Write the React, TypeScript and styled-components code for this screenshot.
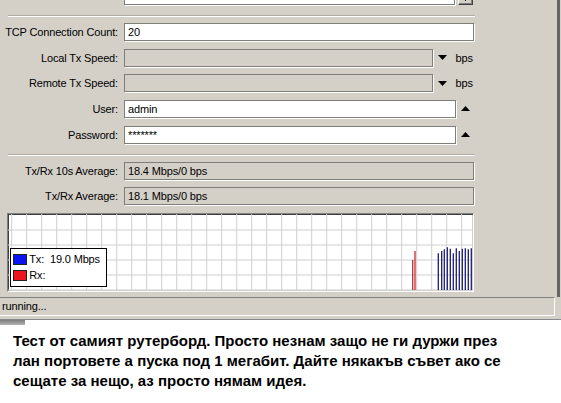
import styled, { createGlobalStyle } from "styled-components";

const GlobalStyle = createGlobalStyle`
  html, body {
    margin: 0;
    padding: 0;
    background: #fff;
  }
  body {
    font-family: "Liberation Sans", Arial, sans-serif;
  }
`;

const Page = styled.div`
  width: 561px;
  height: 403px;
  overflow: hidden;
  display: flex;
  flex-direction: column;
`;

const Window = styled.div`
  background: #d4d0c8;
  height: 320px;
  box-sizing: border-box;
  border-bottom: 1px solid #8a8a8a;
  display: flex;
  flex-direction: column;
  overflow: hidden;
  font-size: 11px;
  letter-spacing: -0.15px;
  color: #000;
`;

const Form = styled.div`
  width: 560px;
  height: 297px;
  flex-shrink: 0;
  box-sizing: border-box;
  border-right: 3px solid #666460;
  display: flex;
  flex-direction: column;
  overflow: hidden;
`;

const Row = styled.div<{ $top?: number }>`
  display: flex;
  align-items: center;
  height: 18px;
  flex-shrink: 0;
  margin-top: ${(p) => (p.$top ?? 7.67)}px;
`;

const Label = styled.div`
  width: 118px;
  margin-right: 6px;
  text-align: right;
  white-space: nowrap;
`;

const Field = styled.div<{ $width: number; $disabled?: boolean }>`
  width: ${(p) => p.$width}px;
  height: 18px;
  box-sizing: border-box;
  border: 1px solid #7f7d78;
  box-shadow: 1px 1px 0 #fff;
  background: ${(p) => (p.$disabled ? "#d4d0c8" : "#fff")};
  padding-left: 3px;
  line-height: 16px;
  white-space: nowrap;
  overflow: hidden;
`;

const DropButton = styled.div`
  width: 15px;
  height: 18px;
  margin-left: 3px;
  box-sizing: border-box;
  border: 1px solid;
  border-color: #fff #404040 #404040 #fff;
  box-shadow: inset -1px -1px 0 #808080;
  display: flex;
  align-items: flex-end;
  justify-content: center;
  padding-bottom: 3px;
`;

const ButtonMark = styled.div`
  width: 1px;
  height: 4px;
  background: #000;
`;

const ArrowBox = styled.div<{ $left: number }>`
  display: flex;
  margin-left: ${(p) => p.$left}px;
`;

const Unit = styled.div`
  margin-left: 9px;
`;

const Separator = styled.div<{ $top: number }>`
  flex-shrink: 0;
  margin: ${(p) => p.$top}px 0 0 8px;
  width: 467px;
  border-top: 1px solid #aeaba4;
  border-bottom: 1px solid #fff;
`;

const Graph = styled.div`
  position: relative;
  flex-shrink: 0;
  margin: 7.7px 0 0 7px;
  width: 467px;
  height: 79px;
  box-sizing: border-box;
  border: 1px solid;
  border-color: #808080 #fff #fff #808080;
  box-shadow: inset 1px 1px 0 #404040, inset -1px -1px 0 #d4d0c8;
  background: #fff;
  overflow: hidden;
`;

const Legend = styled.div`
  position: absolute;
  left: 2px;
  top: 34px;
  width: 97px;
  height: 39px;
  box-sizing: border-box;
  border: 1px solid #000;
  background: #fff;
  padding: 5px 0 0 1.7px;
  display: flex;
  flex-direction: column;
  gap: 5px;
`;

const LegendRow = styled.div`
  display: flex;
  align-items: center;
  height: 11px;
  gap: 2.6px;
  white-space: pre;
`;

const Swatch = styled.div<{ $color: string }>`
  width: 14px;
  height: 11px;
  box-sizing: border-box;
  border: 1px solid #202020;
  background: ${(p) => p.$color};
`;

const StatusBar = styled.div`
  width: 555px;
  height: 19px;
  flex-shrink: 0;
  box-sizing: border-box;
  border-top: 1px solid #808080;
  border-bottom: 1px solid #fff;
  border-right: 1px solid #fff;
  padding-left: 2px;
  line-height: 17px;
`;

const Stub = styled.div`
  width: 25px;
  height: 5px;
  flex-shrink: 0;
  background: linear-gradient(#7c7c7c, #b4b4b4);
`;

const Caption = styled.div`
  padding: 5.5px 0 0 13px;
  font-size: 15px;
  font-weight: bold;
  line-height: 20px;
  color: #000;
  white-space: nowrap;
`;

const Triangle = ({ up }: { up?: boolean }) => (
  <svg width="9" height="5" viewBox="0 0 9 5">
    <path d={up ? "M4.5 0 L9 5 L0 5 Z" : "M0 0 L9 0 L4.5 5 Z"} fill="#000" />
  </svg>
);

const redBars = [
  { x: 404.7, top: 46 },
  { x: 407, top: 37 },
];

const blueBars = [
  { x: 430.3, top: 39.3 },
  { x: 433.7, top: 37 },
  { x: 436.3, top: 35.3 },
  { x: 439.3, top: 33.3 },
  { x: 442.3, top: 34.7 },
  { x: 445.3, top: 39.3 },
  { x: 448.3, top: 34.3 },
  { x: 451.3, top: 37 },
  { x: 454.3, top: 34.7 },
  { x: 457.3, top: 34.3 },
  { x: 460.3, top: 35.3 },
  { x: 463.3, top: 34.3 },
];

const GraphGrid = () => {
  const cols = [];
  for (let x = 3.7; x < 465; x += 15) cols.push(x);
  const rows = [16, 31, 46, 61, 76];
  return (
    <svg width="465" height="77" viewBox="0 0 465 77" style={{ display: "block" }}>
      {cols.map((x) => (
        <line key={"c" + x} x1={x} y1={0} x2={x} y2={77} stroke="#cfcfcf" strokeWidth="1" />
      ))}
      {rows.map((y) => (
        <line key={"r" + y} x1={0} y1={y} x2={465} y2={y} stroke="#cfcfcf" strokeWidth="1" />
      ))}
      {redBars.map((b) => (
        <line key={"rb" + b.x} x1={b.x} y1={b.top} x2={b.x} y2={76} stroke="#c42a2e" strokeWidth="1.3" />
      ))}
      {blueBars.map((b) => (
        <line key={"bb" + b.x} x1={b.x} y1={b.top} x2={b.x} y2={76} stroke="#1c1c78" strokeWidth="1.3" />
      ))}
    </svg>
  );
};

export default function App() {
  return (
    <Page>
      <GlobalStyle />
      <Window>
        <Form>
          <Row $top={-13}>
            <Label>Direction:</Label>
            <Field $width={331}>send</Field>
            <DropButton>
              <ButtonMark />
            </DropButton>
          </Row>
          <Separator $top={10} />
          <Row $top={6}>
            <Label>TCP Connection Count:</Label>
            <Field $width={350}>20</Field>
          </Row>
          <Row>
            <Label>Local Tx Speed:</Label>
            <Field $width={309} $disabled />
            <ArrowBox $left={4.5}>
              <Triangle />
            </ArrowBox>
            <Unit>bps</Unit>
          </Row>
          <Row>
            <Label>Remote Tx Speed:</Label>
            <Field $width={309} $disabled />
            <ArrowBox $left={4.5}>
              <Triangle />
            </ArrowBox>
            <Unit>bps</Unit>
          </Row>
          <Row>
            <Label>User:</Label>
            <Field $width={332}>admin</Field>
            <ArrowBox $left={4.7}>
              <Triangle up />
            </ArrowBox>
          </Row>
          <Row>
            <Label>Password:</Label>
            <Field $width={332}>*******</Field>
            <ArrowBox $left={4.7}>
              <Triangle up />
            </ArrowBox>
          </Row>
          <Separator $top={10.3} />
          <Row $top={6.3}>
            <Label>Tx/Rx 10s Average:</Label>
            <Field $width={350} $disabled>
              18.4 Mbps/0 bps
            </Field>
          </Row>
          <Row $top={7}>
            <Label>Tx/Rx Average:</Label>
            <Field $width={350} $disabled>
              18.1 Mbps/0 bps
            </Field>
          </Row>
          <Graph>
            <GraphGrid />
            <Legend>
              <LegendRow>
                <Swatch $color="#0a14f0" />
                <span>Tx:  19.0 Mbps</span>
              </LegendRow>
              <LegendRow>
                <Swatch $color="#ec1620" />
                <span>Rx:</span>
              </LegendRow>
            </Legend>
          </Graph>
        </Form>
        <StatusBar>running...</StatusBar>
      </Window>
      <Stub />
      <Caption>
        Тест от самият рутерборд. Просто незнам защо не ги дуржи през
        <br />
        лан портовете а пуска под 1 мегабит. Дайте някакъв съвет ако се
        <br />
        сещате за нещо, аз просто нямам идея.
      </Caption>
    </Page>
  );
}
